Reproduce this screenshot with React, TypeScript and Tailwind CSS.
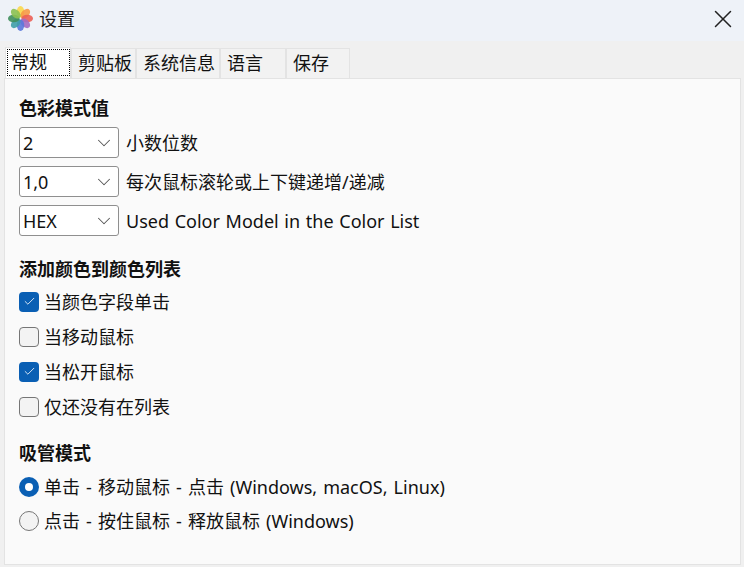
import React from 'react';
import { ChevronDown, Check, X } from 'lucide-react';

const FONT = "font-['Noto_Sans','Noto_Sans_CJK_SC',sans-serif]";

const tabs = [
  { label: '常规', width: 'w-[66px]' },
  { label: '剪贴板', width: 'w-[65px]' },
  { label: '系统信息', width: 'w-[84px]' },
  { label: '语言', width: 'w-[66px]' },
  { label: '保存', width: 'w-[64px]' },
];

const Logo = () => (
  <svg width="25" height="25" viewBox="-13 -13 26 26">
    {['#f9d84a', '#f79a45', '#ec5f55', '#a56cc1', '#5a78dc', '#3f9fa8', '#3f8f5c', '#8cc152'].map((color, i) => (
      <ellipse key={color} cx="0" cy="-7" rx="3.9" ry="6" fill={color} opacity="0.9" transform={`rotate(${i * 45})`} />
    ))}
  </svg>
);

const Combo = ({ value, label }: { value: string; label: string }) => (
  <div className="flex items-center gap-[7px] h-[31px]">
    <div className="w-[100px] h-[31px] flex items-center justify-between pl-[3px] pr-[3px] bg-white border border-[#8f8f8f] rounded-[3px]">
      <span>{value}</span>
      <ChevronDown size={22} strokeWidth={1.1} className="text-[#555]" />
    </div>
    <span>{label}</span>
  </div>
);

const CheckRow = ({ label, checked }: { label: string; checked?: boolean }) => (
  <div className="flex items-center gap-[5px] h-[35px]">
    {checked ? (
      <div className="w-5 h-5 rounded-[4px] bg-[#0a5fb4] flex items-center justify-center">
        <Check size={13} strokeWidth={1.5} className="text-white" />
      </div>
    ) : (
      <div className="w-5 h-5 rounded-[4px] bg-[#f3f3f3] border border-[#767676]" />
    )}
    <span>{label}</span>
  </div>
);

const RadioRow = ({ label, checked }: { label: string; checked?: boolean }) => (
  <div className="flex items-center gap-[5px] h-[35px] [word-spacing:1.4px]">
    {checked ? (
      <div className="w-5 h-5 rounded-full bg-[#0a5fb4] flex items-center justify-center">
        <div className="w-2 h-2 rounded-full bg-white" />
      </div>
    ) : (
      <div className="w-5 h-5 rounded-full bg-[#f3f3f3] border border-[#767676]" />
    )}
    <span>{label}</span>
  </div>
);

export default function App() {
  return (
    <div className={`w-[744px] h-[567px] flex flex-col bg-[#f0f0f0] text-[18px] leading-[24px] text-[#111] [word-spacing:1px] overflow-hidden ${FONT}`}>
      {/* title bar */}
      <div className="h-[41px] shrink-0 bg-[#eef2f8] flex items-center pl-[8px] pr-[6px] pb-[4px]">
        <Logo />
        <span className="ml-[6px] text-[#1a1a1a]">设置</span>
        <X size={30} strokeWidth={1.2} className="ml-auto text-[#222]" />
      </div>

      {/* tabs */}
      <div className="flex items-end h-[37px] shrink-0 pl-[5px]">
        {tabs.map((tab, i) => (
          <div
            key={tab.label}
            className={`${tab.width} flex border-t border-x border-[#e3e3e3] ${i === 0 ? 'h-[31px] bg-white pt-px pb-[2px] pl-px' : 'h-[30px] items-center pl-[6px] pb-[2px] bg-[#f2f2f2]'}`}
          >
            {i === 0 ? (
              <div className="w-full h-full flex items-center pl-[3px] pb-px border border-dotted border-black">{tab.label}</div>
            ) : (
              tab.label
            )}
          </div>
        ))}
      </div>

      {/* page */}
      <div className="ml-[4px] mr-[3px] mb-[2px] flex-1 bg-[#fafafa] border border-[#e3e3e3] pl-[14px] pt-[16px]">
        <div className="font-bold h-[26px] flex items-center">色彩模式值</div>
        <div className="flex flex-col gap-2 mt-[6px]">
          <Combo value="2" label="小数位数" />
          <Combo value="1,0" label="每次鼠标滚轮或上下键递增/递减" />
          <Combo value="HEX" label="Used Color Model in the Color List" />
        </div>

        <div className="font-bold h-[26px] flex items-center mt-[20px]">添加颜色到颜色列表</div>
        <div className="flex flex-col mt-[2px]">
          <CheckRow label="当颜色字段单击" checked />
          <CheckRow label="当移动鼠标" />
          <CheckRow label="当松开鼠标" checked />
          <CheckRow label="仅还没有在列表" />
        </div>

        <div className="font-bold h-[26px] flex items-center mt-[16px]">吸管模式</div>
        <div className="flex flex-col mt-[3px]">
          <RadioRow label="单击 - 移动鼠标 - 点击 (Windows, macOS, Linux)" checked />
          <div className="-mt-px">
            <RadioRow label="点击 - 按住鼠标 - 释放鼠标 (Windows)" />
          </div>
        </div>
      </div>
    </div>
  );
}
